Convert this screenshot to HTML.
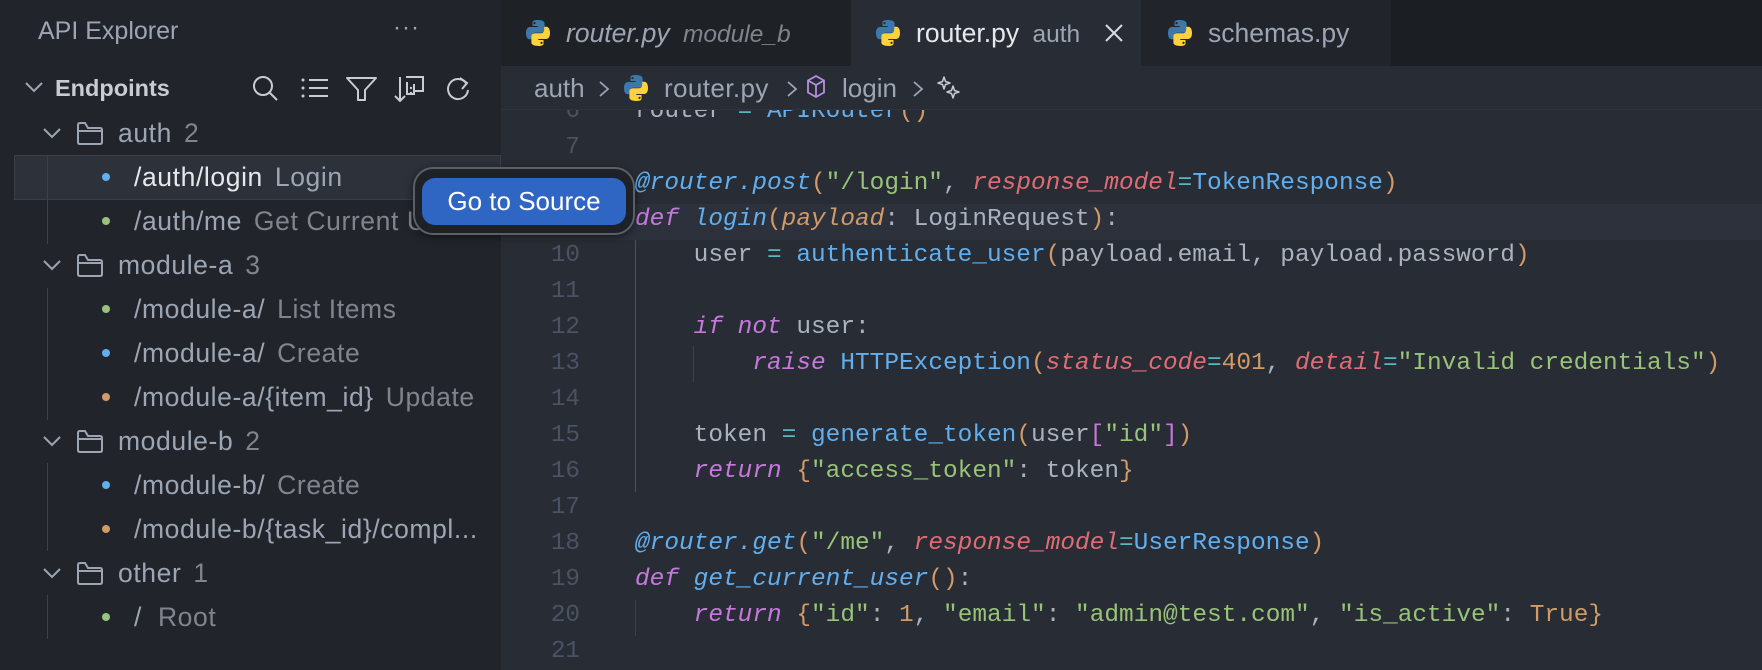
<!DOCTYPE html>
<html><head><meta charset="utf-8"><style>
*{margin:0;padding:0;box-sizing:border-box}
body{width:1762px;height:670px;overflow:hidden;background:#282c34;font-family:"Liberation Sans",sans-serif;position:relative}
.abs{position:absolute;white-space:nowrap}
#side{position:absolute;left:0;top:0;width:501px;height:670px;background:#21252b}
#tabs{position:absolute;left:501px;top:0;width:1261px;height:66px;background:#1b1e23}
.tab{position:absolute;top:0;height:66px;font-size:26.5px;line-height:66px;color:#7f848e}
#bc{position:absolute;left:501px;top:66px;width:1261px;height:44px;background:#282c34;border-bottom:1px solid #2e333c;z-index:2;font-size:26px;color:#9da5b4}
.row{position:absolute;left:0;height:44px;line-height:44px;font-size:26.5px;letter-spacing:.6px;color:#9da5b4;white-space:nowrap}
.dot{position:absolute;width:8px;height:8px;border-radius:50%;top:18px;left:102px}
.code{position:absolute;left:635px;font-family:"Liberation Mono",monospace;font-size:24.45px;line-height:36px;height:36px;white-space:pre;color:#abb2bf}
.ln{position:absolute;left:520px;width:60px;text-align:right;font-family:"Liberation Mono",monospace;font-size:24.3px;line-height:36px;color:#4b5263}
.k{color:#c678dd;font-style:italic}.f{color:#61afef}.fi{color:#61afef;font-style:italic}.p{color:#e06c75;font-style:italic}
.s{color:#98c379}.n{color:#d19a66}.o{color:#56b6c2}.b{color:#d19a66}.pu{color:#c678dd}.pa{color:#d19a66;font-style:italic}
.guide{position:absolute;width:1px;background:#3b404a}
</style></head><body>
<div id="side">
  <div class="abs" style="left:38px;top:16px;font-size:25px;line-height:30px;color:#9da5b4">API Explorer</div>
  <div class="abs" style="left:393px;top:14px;font-size:24px;color:#9da5b4;letter-spacing:1px">···</div>
  <svg class="abs" style="left:24px;top:80px" width="20" height="14" viewBox="0 0 20 14"><path d="M2 3 L10 11 L18 3" fill="none" stroke="#9da5b4" stroke-width="2"/></svg>
  <div class="abs" style="left:55px;top:72px;font-size:23.5px;line-height:32px;font-weight:bold;color:#c8ccd4">Endpoints</div>
  <svg class="abs" style="left:251px;top:74px" width="220" height="30" viewBox="0 0 220 30" fill="none" stroke="#c8ccd4" stroke-width="2">
    <circle cx="12" cy="12" r="9"/><path d="M18.5 18.5 L26 26"/>
    <circle cx="52" cy="6" r="1.5" fill="#c8ccd4" stroke="none"/><circle cx="52" cy="14" r="1.5" fill="#c8ccd4" stroke="none"/><circle cx="52" cy="22" r="1.5" fill="#c8ccd4" stroke="none"/>
    <path d="M58 6H77M58 14H77M58 22H77"/>
    <path d="M96 4H125L114 16V26H107V16Z" stroke-linejoin="round"/>
    <path d="M149 3V27M144 22L149 27L154 22"/><path d="M155 3H172V17H163M156 8V20H163V10" />
    <circle cx="160" cy="14" r="1.2" fill="#c8ccd4" stroke="none"/><circle cx="160" cy="19" r="1.2" fill="#c8ccd4" stroke="none"/>
    <path d="M215 9A10 10 0 1 0 217 16"/><path d="M209 4L216 9L211 15" />
  </svg>
  <div class="abs" style="left:14px;top:155px;width:487px;height:45px;background:#2c313a;border:1px solid #3a3f4a"></div>
  <div class="guide" style="left:47px;top:156px;height:88px"></div>
  <div class="guide" style="left:47px;top:288px;height:132px"></div>
  <div class="guide" style="left:47px;top:463px;height:88px"></div>
  <div class="guide" style="left:47px;top:595px;height:44px"></div>

  <div class="row" style="top:111px"><svg class="abs" style="left:42px;top:15px" width="20" height="14"><path d="M2 3 L10 11 L18 3" fill="none" stroke="#9da5b4" stroke-width="2"/></svg><svg class="abs" style="left:76px;top:9px" width="28" height="26"><path d="M2 5V22Q2 24 4 24H24Q26 24 26 22V10Q26 8 24 8H12L9 3H4Q2 3 2 5Z M2 11H26" fill="none" stroke="#9da5b4" stroke-width="2"/></svg><span class="abs" style="left:118px">auth <span style="color:#7f848e;margin-left:4px">2</span></span></div>
  <div class="row" style="top:155px"><div class="dot" style="background:#61afef"></div><span class="abs" style="left:134px;color:#e6e8ec">/auth/login <span style="color:#9da5b4;margin-left:4px">Login</span></span></div>
  <div class="row" style="top:199px"><div class="dot" style="background:#98c379"></div><span class="abs" style="left:134px">/auth/me <span style="color:#7f848e;margin-left:4px">Get Current User</span></span></div>
  <div class="row" style="top:243px"><svg class="abs" style="left:42px;top:15px" width="20" height="14"><path d="M2 3 L10 11 L18 3" fill="none" stroke="#9da5b4" stroke-width="2"/></svg><svg class="abs" style="left:76px;top:9px" width="28" height="26"><path d="M2 5V22Q2 24 4 24H24Q26 24 26 22V10Q26 8 24 8H12L9 3H4Q2 3 2 5Z M2 11H26" fill="none" stroke="#9da5b4" stroke-width="2"/></svg><span class="abs" style="left:118px">module-a <span style="color:#7f848e;margin-left:4px">3</span></span></div>
  <div class="row" style="top:287px"><div class="dot" style="background:#98c379"></div><span class="abs" style="left:134px">/module-a/ <span style="color:#7f848e;margin-left:4px">List Items</span></span></div>
  <div class="row" style="top:331px"><div class="dot" style="background:#61afef"></div><span class="abs" style="left:134px">/module-a/ <span style="color:#7f848e;margin-left:4px">Create</span></span></div>
  <div class="row" style="top:375px"><div class="dot" style="background:#d19a66"></div><span class="abs" style="left:134px">/module-a/{item_id} <span style="color:#7f848e;margin-left:4px">Update</span></span></div>
  <div class="row" style="top:419px"><svg class="abs" style="left:42px;top:15px" width="20" height="14"><path d="M2 3 L10 11 L18 3" fill="none" stroke="#9da5b4" stroke-width="2"/></svg><svg class="abs" style="left:76px;top:9px" width="28" height="26"><path d="M2 5V22Q2 24 4 24H24Q26 24 26 22V10Q26 8 24 8H12L9 3H4Q2 3 2 5Z M2 11H26" fill="none" stroke="#9da5b4" stroke-width="2"/></svg><span class="abs" style="left:118px">module-b <span style="color:#7f848e;margin-left:4px">2</span></span></div>
  <div class="row" style="top:463px"><div class="dot" style="background:#61afef"></div><span class="abs" style="left:134px">/module-b/ <span style="color:#7f848e;margin-left:4px">Create</span></span></div>
  <div class="row" style="top:507px"><div class="dot" style="background:#d19a66"></div><span class="abs" style="left:134px">/module-b/{task_id}/compl...</span></div>
  <div class="row" style="top:551px"><svg class="abs" style="left:42px;top:15px" width="20" height="14"><path d="M2 3 L10 11 L18 3" fill="none" stroke="#9da5b4" stroke-width="2"/></svg><svg class="abs" style="left:76px;top:9px" width="28" height="26"><path d="M2 5V22Q2 24 4 24H24Q26 24 26 22V10Q26 8 24 8H12L9 3H4Q2 3 2 5Z M2 11H26" fill="none" stroke="#9da5b4" stroke-width="2"/></svg><span class="abs" style="left:118px">other <span style="color:#7f848e;margin-left:4px">1</span></span></div>
  <div class="row" style="top:595px"><div class="dot" style="background:#98c379"></div><span class="abs" style="left:134px">/ <span style="color:#7f848e;margin-left:8px">Root</span></span></div>
</div>

<svg width="0" height="0" style="position:absolute"><defs><symbol id="py" viewBox="0 0 28 28"><path d="M13.5 1C8 1 8.5 3.4 8.5 3.4V7h5.2v1H6.2S2 7.5 2 14s3.6 6.3 3.6 6.3h2.2v-3s-.1-3.6 3.6-3.6h5.8s3.4.1 3.4-3.3V4.6S21.1 1 13.5 1zm-3 2a1.1 1.1 0 1 1 0 2.2 1.1 1.1 0 0 1 0-2.2z" fill="#3c78aa"/><path d="M14.5 27c5.5 0 5-2.4 5-2.4V21h-5.2v-1h7.5S26 20.5 26 14s-3.6-6.3-3.6-6.3h-2.2v3s.1 3.6-3.6 3.6h-5.8s-3.4-.1-3.4 3.3v5.8S6.9 27 14.5 27zm3-2a1.1 1.1 0 1 1 0-2.2 1.1 1.1 0 0 1 0 2.2z" fill="#fdd23c"/></symbol></defs></svg>

<div id="tabs">
  <div class="tab" style="left:0;width:350px;background:#1e2227">
    <svg class="abs" style="left:23px;top:19px" width="28" height="28"><use href="#py"/></svg>
    <span class="abs" style="left:65px;font-style:italic;color:#9da5b4">router.py <span style="font-size:24.5px;color:#7f848e;margin-left:6px">module_b</span></span>
  </div>
  <div class="tab" style="left:350px;width:290px;background:#282c34">
    <svg class="abs" style="left:23px;top:19px" width="28" height="28"><use href="#py"/></svg>
    <span class="abs" style="left:65px;color:#e6e8ec">router.py <span style="font-size:24.5px;color:#9da5b4;margin-left:6px">auth</span></span>
    <svg class="abs" style="left:253px;top:23px" width="20" height="20"><path d="M2 2L18 18M18 2L2 18" stroke="#d7dae0" stroke-width="2"/></svg>
  </div>
  <div class="tab" style="left:640px;width:250px;background:#21252b">
    <svg class="abs" style="left:25px;top:19px" width="28" height="28"><use href="#py"/></svg>
    <span class="abs" style="left:67px;color:#9da5b4">schemas.py</span>
  </div>
</div>

<div id="bc">
  <span class="abs" style="left:33px;top:5px;line-height:34px">auth</span>
  <svg class="abs" style="left:97px;top:14px" width="12" height="18"><path d="M2 2L10 9L2 16" fill="none" stroke="#9da5b4" stroke-width="1.8"/></svg>
  <svg class="abs" style="left:121px;top:8px" width="28" height="28"><use href="#py"/></svg>
  <span class="abs" style="left:163px;top:5px;line-height:34px;letter-spacing:.4px">router.py</span>
  <svg class="abs" style="left:285px;top:14px" width="12" height="18"><path d="M2 2L10 9L2 16" fill="none" stroke="#9da5b4" stroke-width="1.8"/></svg>
  <svg class="abs" style="left:305px;top:8px" width="20" height="26"><path d="M10 2L18 6.5V18.5L10 23L2 18.5V6.5Z M2 6.5L10 11L18 6.5 M10 11V23" fill="none" stroke="#b58fe0" stroke-width="1.8"/></svg>
  <span class="abs" style="left:341px;top:5px;line-height:34px">login</span>
  <svg class="abs" style="left:411px;top:14px" width="12" height="18"><path d="M2 2L10 9L2 16" fill="none" stroke="#9da5b4" stroke-width="1.8"/></svg>
  <svg class="abs" style="left:435px;top:9px" width="26" height="26"><path d="M8 2L9.5 6.5L14 8L9.5 9.5L8 14L6.5 9.5L2 8L6.5 6.5Z M17 11L18.5 15.5L23 17L18.5 18.5L17 23L15.5 18.5L11 17L15.5 15.5Z" fill="none" stroke="#c8ccd4" stroke-width="1.5" stroke-linejoin="round"/></svg>
</div>

<div style="position:absolute;left:501px;top:204px;width:1261px;height:36px;background:#2c313c"></div>
<div style="position:absolute;left:0;top:110px;width:1762px;height:560px;overflow:hidden">
 <div style="position:absolute;left:0;top:-110px;width:1762px;height:700px">
  <div class="guide" style="left:635px;top:240px;height:252px;background:#4a505c"></div>
  <div class="guide" style="left:693px;top:346px;height:36px"></div>
  <div class="guide" style="left:635px;top:600px;height:36px"></div>
  <div class="ln" style="top:94px">6</div><div class="code" style="top:94px">router <span class="o">=</span> <span class="f">APIRouter</span><span class="b">()</span></div>
  <div class="ln" style="top:130px">7</div>
  <div class="ln" style="top:166px">8</div><div class="code" style="top:166px"><span class="fi">@router.post</span><span class="b">(</span><span class="s">"/login"</span>, <span class="p">response_model</span><span class="o">=</span><span class="f">TokenResponse</span><span class="b">)</span></div>
  <div class="ln" style="top:202px;color:#9da5b4">9</div><div class="code" style="top:202px"><span class="k">def</span> <span class="fi">login</span><span class="b">(</span><span class="pa">payload</span>: LoginRequest<span class="b">)</span>:</div>
  <div class="ln" style="top:238px">10</div><div class="code" style="top:238px">    user <span class="o">=</span> <span class="f">authenticate_user</span><span class="b">(</span>payload.email, payload.password<span class="b">)</span></div>
  <div class="ln" style="top:274px">11</div>
  <div class="ln" style="top:310px">12</div><div class="code" style="top:310px">    <span class="k">if not</span> user:</div>
  <div class="ln" style="top:346px">13</div><div class="code" style="top:346px">        <span class="k">raise</span> <span class="f">HTTPException</span><span class="b">(</span><span class="p">status_code</span><span class="o">=</span><span class="n">401</span>, <span class="p">detail</span><span class="o">=</span><span class="s">"Invalid credentials"</span><span class="b">)</span></div>
  <div class="ln" style="top:382px">14</div>
  <div class="ln" style="top:418px">15</div><div class="code" style="top:418px">    token <span class="o">=</span> <span class="f">generate_token</span><span class="b">(</span>user<span class="pu">[</span><span class="s">"id"</span><span class="pu">]</span><span class="b">)</span></div>
  <div class="ln" style="top:454px">16</div><div class="code" style="top:454px">    <span class="k">return</span> <span class="b">{</span><span class="s">"access_token"</span>: token<span class="b">}</span></div>
  <div class="ln" style="top:490px">17</div>
  <div class="ln" style="top:526px">18</div><div class="code" style="top:526px"><span class="fi">@router.get</span><span class="b">(</span><span class="s">"/me"</span>, <span class="p">response_model</span><span class="o">=</span><span class="f">UserResponse</span><span class="b">)</span></div>
  <div class="ln" style="top:562px">19</div><div class="code" style="top:562px"><span class="k">def</span> <span class="fi">get_current_user</span><span class="b">()</span>:</div>
  <div class="ln" style="top:598px">20</div><div class="code" style="top:598px">    <span class="k">return</span> <span class="b">{</span><span class="s">"id"</span>: <span class="n">1</span>, <span class="s">"email"</span>: <span class="s">"admin@test.com"</span>, <span class="s">"is_active"</span>: <span class="n">True</span><span class="b">}</span></div>
  <div class="ln" style="top:634px">21</div>
 </div>
</div>

<div style="position:absolute;left:413px;top:167px;width:222px;height:68px;border-radius:20px;background:#1e2126;border:2px solid #5a5f68;box-shadow:0 2px 8px rgba(0,0,0,.5);z-index:5">
  <div style="position:absolute;left:7px;top:9px;width:204px;height:47px;border-radius:13px;background:#2f66c3;color:#fff;font-size:26px;line-height:47px;text-align:center">Go to Source</div>
</div>
</body></html>
